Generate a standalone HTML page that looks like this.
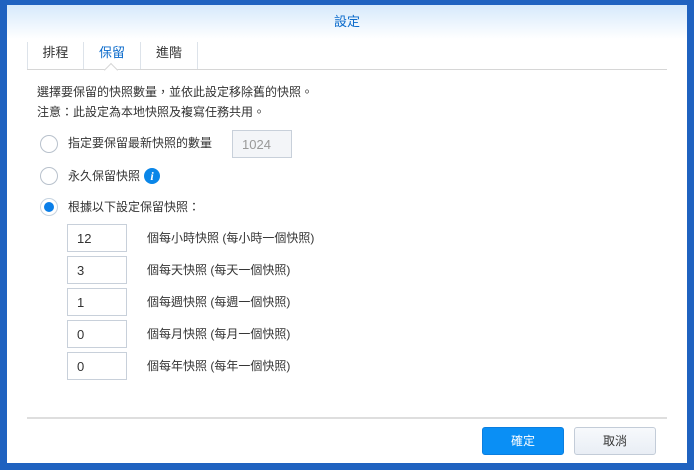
<!DOCTYPE html><html><head><meta charset="utf-8"><style>
*{box-sizing:border-box;margin:0;padding:0}
body{width:694px;height:470px;background:#1f62c0;font-family:"Liberation Sans","Noto Sans CJK TC",sans-serif;font-size:12px;color:#333;position:relative;overflow:hidden}
.dlg{position:absolute;left:7px;top:5px;width:680px;height:458px;background:#fff}
.title{position:absolute;left:0;top:0;width:680px;height:34px;background:linear-gradient(#d6e9fb,#fff);text-align:center;line-height:34px;color:#0a6acb;font-size:13px}
.tabs{position:absolute;left:20px;top:34px;width:640px;height:31px;border-bottom:1px solid #d6d6d6}
.tab{position:absolute;top:3px;height:27px;line-height:22px;text-align:center;border-right:1px solid #dde3ea;font-size:13px}
.a{position:absolute;white-space:nowrap}
.radio{position:absolute;width:18px;height:18px;border:1px solid #b8c1cc;border-radius:50%;background:#fff}
.inp{position:absolute;left:60px;width:60px;height:28px;border:1px solid #c8d0da;padding-left:9px;line-height:27px;font-size:13px}
.lbl{position:absolute;left:140px;font-size:12px}
.btn{position:absolute;top:422px;width:82px;height:28px;border-radius:3px;text-align:center;line-height:27px;font-size:12px}
</style></head><body>
<div class="dlg">
<div class="title">設定</div>
<div class="tabs">
<div class="tab" style="left:0;width:57px;border-left:1px solid #dde3ea">排程</div>
<div class="tab" style="left:57px;width:57px;color:#0a6acb">保留</div>
<div class="tab" style="left:114px;width:57px">進階</div>
<div style="position:absolute;left:79px;top:26px;width:10px;height:10px;background:#fff;border-left:1px solid #d6d6d6;border-top:1px solid #d6d6d6;transform:rotate(45deg)"></div>
</div>
<div class="a" style="left:30px;top:78px">選擇要保留的快照數量，並依此設定移除舊的快照。</div>
<div class="a" style="left:30px;top:98px">注意：此設定為本地快照及複寫任務共用。</div>
<div class="radio" style="left:33px;top:130px"></div>
<div class="a" style="left:61px;top:129px">指定要保留最新快照的數量</div>
<div style="position:absolute;left:225px;top:125px;width:60px;height:28px;border:1px solid #c8d0da;background:#f3f5f8;color:#999;padding-left:9px;line-height:27px;font-size:13px">1024</div>
<div class="radio" style="left:33px;top:162px"></div>
<div class="a" style="left:61px;top:162px">永久保留快照</div>
<div style="position:absolute;left:137px;top:163px;width:16px;height:16px;border-radius:50%;background:#0a86e8;color:#fff;font:italic bold 12px 'Liberation Serif',serif;text-align:center;line-height:16px">i</div>
<div class="radio" style="left:33px;top:193px;border-color:#c6d3e0"><div style="position:absolute;left:3px;top:3px;width:10px;height:10px;border-radius:50%;background:#0a7ee8"></div></div>
<div class="a" style="left:61px;top:193px">根據以下設定保留快照：</div>
<div class="inp" style="top:219px">12</div><div class="lbl" style="top:224px">個每小時快照 (每小時一個快照)</div>
<div class="inp" style="top:251px">3</div><div class="lbl" style="top:256px">個每天快照 (每天一個快照)</div>
<div class="inp" style="top:283px">1</div><div class="lbl" style="top:288px">個每週快照 (每週一個快照)</div>
<div class="inp" style="top:315px">0</div><div class="lbl" style="top:320px">個每月快照 (每月一個快照)</div>
<div class="inp" style="top:347px">0</div><div class="lbl" style="top:352px">個每年快照 (每年一個快照)</div>
<div style="position:absolute;left:20px;top:412px;width:640px;height:2px;background:#dedede"></div>
<div class="btn" style="left:475px;background:#0a8ff5;border:1px solid #0a7ee0;color:#fff">確定</div>
<div class="btn" style="left:567px;background:linear-gradient(#f7f9fc,#e9eef5);border:1px solid #c3ccd8;color:#333">取消</div>
</div>
</body></html>
